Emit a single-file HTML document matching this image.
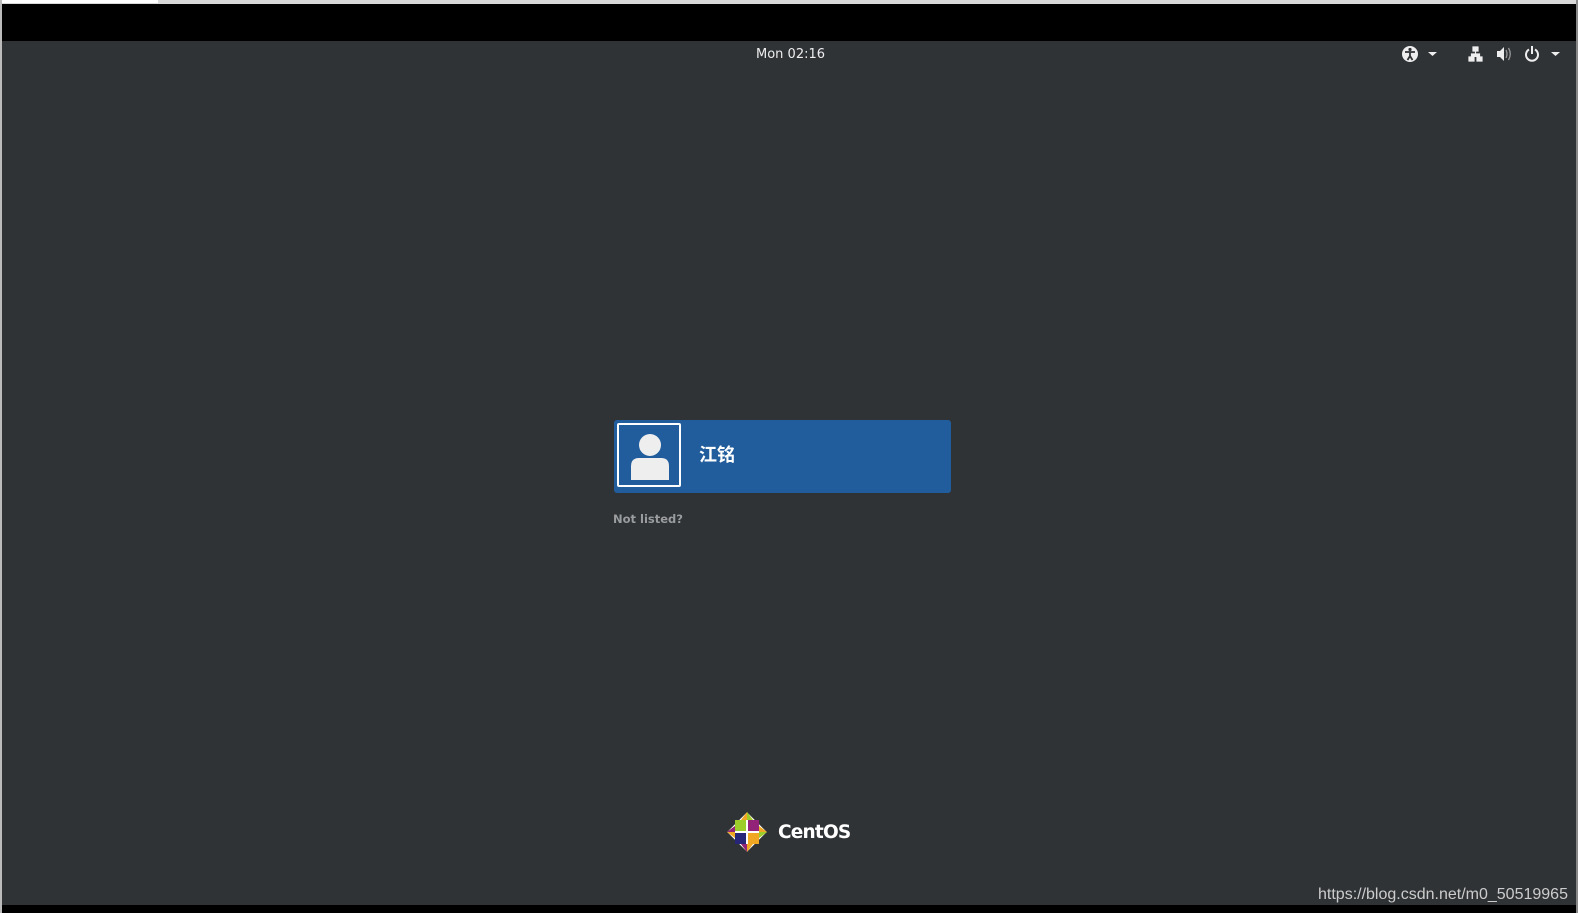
<!DOCTYPE html>
<html><head><meta charset="utf-8"><style>
body{margin:0;width:1578px;height:913px;overflow:hidden;background:#000;position:relative;font-family:"Liberation Sans","Noto Sans CJK SC",sans-serif}
.top{position:absolute;left:0;top:0;width:1578px;height:4px;background:#d8d8d8}
.top i{position:absolute;left:2px;top:0;width:156px;height:3px;background:#fff}
.main{position:absolute;left:2px;top:41px;width:1574px;height:864px;background:#2f3336}
.lb{position:absolute;left:0;top:0;width:2px;height:913px;background:#bbb}
.rb{position:absolute;right:0;top:0;width:2px;height:913px;background:#888}
.clock{position:absolute;left:756px;top:47px;color:#eee;font-size:13px;font-family:"DejaVu Sans",sans-serif}
.card{position:absolute;left:614px;top:420px;width:337px;height:73px;background:#215d9c;border-radius:3px}
.av{position:absolute;left:3px;top:3px;width:60px;height:60px;border:2px solid #fff;border-radius:2px;background:#215d9c}
.name{position:absolute;left:85px;top:21px;color:#fff;font-size:18px;font-weight:bold}
.nl{position:absolute;left:613px;top:512px;color:#9a9c9e;font-size:11.5px;font-weight:bold;font-family:"DejaVu Sans",sans-serif}
.logo{position:absolute;left:778px;top:822px;color:#fff;font-size:18.5px;font-weight:bold;font-family:"DejaVu Sans",sans-serif;letter-spacing:-0.8px}
.url{position:absolute;left:1318px;top:886px;color:#ccc;font-size:16px}
</style></head><body>
<div class="top"><i></i></div>
<div class="main"></div>
<div class="lb"></div><div class="rb"></div>
<div class="clock">Mon 02:16</div>
<svg style="position:absolute;left:1389px;top:40px" width="190" height="28" viewBox="0 0 190 28">
<circle cx="21" cy="14" r="8" fill="#eee"/>
<circle cx="21" cy="9.5" r="1.6" fill="#2f3336"/>
<path d="M16 12h10M21 12v4l-2.5 4M21 16l2.5 4" stroke="#2f3336" stroke-width="1.8" fill="none"/>
<path d="M39 12h9l-4.5 4z" fill="#eee"/>
<path d="M84 7h5v4h-5zM80 17h5v4h-5zM88 17h5v4h-5zM86.5 11v3M82.5 17v-3h8v3" fill="#eee" stroke="#eee" stroke-width="1.2"/>
<path d="M108 11h3l4-4v14l-4-4h-3z" fill="#eee"/>
<path d="M117 10q2 4 0 8M119.5 8q3.5 6 0 12" stroke="#999" stroke-width="1.3" fill="none"/>
<path d="M140 9.5a6 6 0 1 0 6 0" stroke="#eee" stroke-width="2" fill="none"/>
<path d="M143 6v8" stroke="#eee" stroke-width="2"/>
<path d="M162 12h9l-4.5 4z" fill="#eee"/>
</svg>
<div class="card"><div class="av"><svg width="60" height="60" viewBox="0 0 60 60"><circle cx="31" cy="20" r="11" fill="#eee"/><path d="M12 55v-14q0-8 8-8h22q8 0 8 8v14z" fill="#eee"/></svg></div><div class="name">江铭</div></div>
<div class="nl">Not listed?</div>
<svg style="position:absolute;left:725px;top:810px" width="44" height="44" viewBox="0 0 44 44">
<g transform="rotate(45 22 22)"><rect x="8" y="8" width="28" height="28" fill="#fff"/></g>
<rect x="10" y="10" width="11" height="11" fill="#9ccd2a"/><rect x="23" y="10" width="11" height="11" fill="#932279"/>
<rect x="10" y="23" width="11" height="11" fill="#262577"/><rect x="23" y="23" width="11" height="11" fill="#efa724"/>
<path d="M22 2l6 8h-12zM2 22l8-6v12zM42 22l-8 6v-12zM22 42l-6-8h12z" fill="#efa724"/>
<path d="M22 2l6 8h-6zM42 22l-8 6v-6z" fill="#9ccd2a"/><path d="M2 22l8-6v6zM22 42l-6-8h6z" fill="#932279"/>
</svg>
<div class="logo">CentOS</div>
<div class="url">https://blog.csdn.net/m0_50519965</div>
</body></html>
